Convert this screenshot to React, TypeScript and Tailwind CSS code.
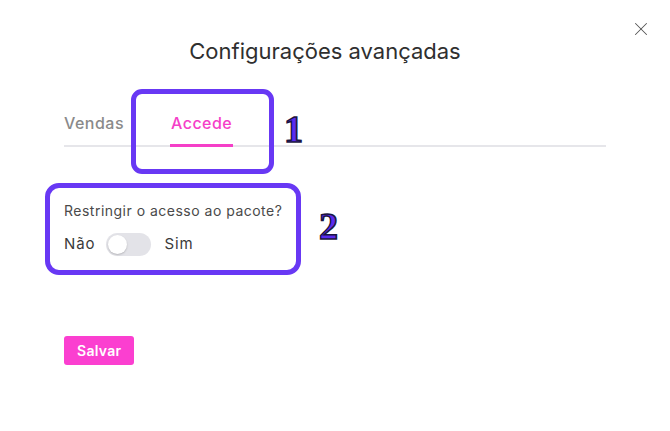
import { X } from "lucide-react";

export default function App() {
  return (
    <div
      className="relative h-[431px] w-[670px] overflow-hidden bg-white"
      style={{ fontFamily: "Inter, 'Noto Sans', sans-serif" }}
    >
      <button className="absolute right-[18px] top-[18px] text-[#555]">
        <X className="size-[22px]" strokeWidth={1.1} />
      </button>

      <div className="px-[64px] pt-[37px]">
        <h2 className="pr-[20px] text-center text-[22px] leading-[28px] text-[#2f2f2f]">
          Configurações avançadas
        </h2>

        {/* tabs */}
        <div className="mt-[48px] flex border-b-2 border-[#e6e6ea] text-[16px] font-medium leading-[20px] tracking-[0.03em]">
          <div className="pb-[12px] text-[#8a8a8a]">Vendas</div>
          <div className="-mb-[2px] ml-[46px] border-b-[3px] border-[#f53fc8] px-[1px] pb-[11px] text-[#f53fc8]">
            Accede
          </div>
        </div>

        {/* restrict access */}
        <p className="mt-[55px] text-[14px] leading-[18px] tracking-[0.035em] text-[#4a4a4a]">
          Restringir o acesso ao pacote?
        </p>
        <div className="mt-[13px] flex items-center text-[15px] tracking-[0.06em] text-[#3a3a3a]">
          <span>Não</span>
          <div className="ml-[11px] flex h-[23px] w-[45px] items-center rounded-full bg-[#e3e3e8] px-[2px]">
            <div className="size-[19px] rounded-full bg-white shadow-[0_1px_2px_rgba(0,0,0,0.2)]" />
          </div>
          <span className="ml-[13px]">Sim</span>
        </div>

        <button className="mt-[80px] h-[29px] rounded-[3px] bg-[#fb3fd0] px-[13px] text-[14px] font-semibold tracking-[0.02em] text-white">
          Salvar
        </button>
      </div>

      {/* annotations */}
      <div className="pointer-events-none absolute left-[131px] top-[89px] h-[85px] w-[143px] rounded-[11px] border-[5px] border-[#6838f4]" />
      <div className="pointer-events-none absolute left-[45px] top-[183px] h-[92px] w-[256px] rounded-[14px] border-[5px] border-[#6838f4]" />
      <span
        className="absolute left-[284px] top-[108px] text-[38px] font-bold leading-[42px] text-[#5a2cf0]"
        style={{ fontFamily: "'Liberation Serif', serif", WebkitTextStroke: "1.5px #1b1540" }}
      >
        1
      </span>
      <span
        className="absolute left-[319px] top-[205px] text-[38px] font-bold leading-[42px] text-[#5a2cf0]"
        style={{ fontFamily: "'Liberation Serif', serif", WebkitTextStroke: "1.5px #1b1540" }}
      >
        2
      </span>
    </div>
  );
}
